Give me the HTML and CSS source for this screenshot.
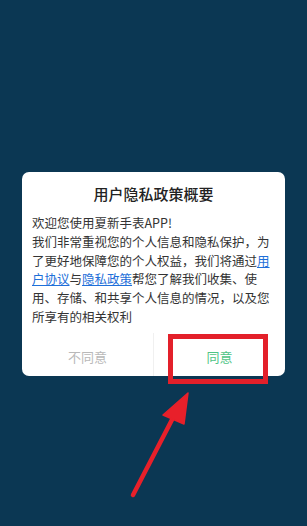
FILE: index.html
```html
<!DOCTYPE html>
<html lang="zh-CN">
<head>
<meta charset="utf-8">
<link rel="stylesheet" href="styles.css">
</head>
<body>
<div class="screen">
  <div class="dialog">
    <div class="title">用户隐私政策概要</div>
    <div class="content">欢迎您使用夏新手表APP!<br>我们非常重视您的个人信息和隐私保护，为了更好地保障您的个人权益，我们将通过<a class="link">用户协议</a>与<a class="link">隐私政策</a>帮您了解我们收集、使用、存储、和共享个人信息的情况，以及您所享有的相关权利</div>
    <div class="actions">
      <div class="btn disagree">不同意</div>
      <div class="btn agree">同意</div>
    </div>
  </div>
  <div class="highlight"></div>
  <svg class="arrow" width="307" height="526" viewBox="0 0 307 526">
    <line x1="133" y1="495" x2="176" y2="412" stroke="#e8202a" stroke-width="4.5" stroke-linecap="round"/>
    <polygon points="188,393 163,415 184,424" fill="#e8202a" stroke="#e8202a" stroke-width="1.5" stroke-linejoin="round"/>
  </svg>
</div>
</body>
</html>
```
FILE: styles.css
```css
html, body {
  margin: 0;
  padding: 0;
}
body {
  background: #0b3753;
  font-family: "Noto Sans CJK SC", "Noto Sans", sans-serif;
}
.screen {
  position: relative;
  width: 307px;
  height: 526px;
  overflow: hidden;
  padding-top: 172px;
  box-sizing: border-box;
}
.dialog {
  margin-left: 22px;
  width: 263px;
  height: 204px;
  background: #ffffff;
  border-radius: 7px;
  display: flex;
  flex-direction: column;
}
.title {
  padding-top: 11px;
  height: 30px;
  line-height: 22px;
  font-size: 15px;
  font-weight: 500;
  color: #222;
  text-align: center;
  box-sizing: border-box;
}
.content {
  margin-top: 12px;
  padding-left: 10px;
  width: 240px;
  font-size: 12.5px;
  line-height: 18.8px;
  color: #333;
}
.link {
  color: #1e6fd9;
  text-decoration: underline;
}
.actions {
  margin-top: auto;
  height: 43px;
  display: flex;
}
.btn {
  flex: 1;
  display: flex;
  align-items: center;
  justify-content: center;
  font-size: 13px;
  padding-top: 4px;
}
.disagree {
  color: #b9b9b9;
  border-right: 1px solid #f0f0f0;
}
.agree {
  color: #4fc486;
}
.highlight {
  position: absolute;
  left: 168px;
  top: 334px;
  width: 100px;
  height: 50px;
  border: 5.5px solid #e3202a;
  box-sizing: border-box;
}
.arrow {
  position: absolute;
  left: 0;
  top: 0;
}
```
